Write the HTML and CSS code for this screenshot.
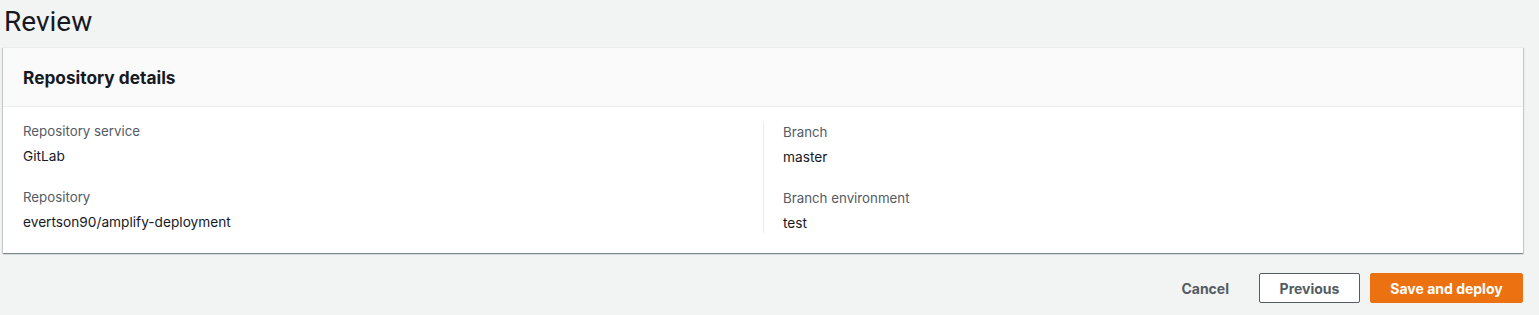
FILE: index.html
```html
<!DOCTYPE html>
<html lang="en">
<head>
    <meta charset="UTF-8">
    <meta name="viewport" content="width=device-width, initial-scale=1.0">
    <title>Review</title>
    <link rel="stylesheet" href="styles.css">
</head>
<body>
    <div class="page">
        <h1 class="page-title">Review</h1>

        <div class="card">
            <div class="card-header">
                <h2>Repository details</h2>
            </div>
            <div class="card-body">
                <div class="column">
                    <div class="field">
                        <div class="field-label">Repository service</div>
                        <div class="field-value">GitLab</div>
                    </div>
                    <div class="field">
                        <div class="field-label">Repository</div>
                        <div class="field-value">evertson90/amplify-deployment</div>
                    </div>
                </div>
                <div class="column column-split">
                    <div class="field">
                        <div class="field-label">Branch</div>
                        <div class="field-value">master</div>
                    </div>
                    <div class="field">
                        <div class="field-label">Branch environment</div>
                        <div class="field-value">test</div>
                    </div>
                </div>
            </div>
        </div>

        <div class="actions">
            <button type="button" class="btn btn-link">Cancel</button>
            <button type="button" class="btn btn-normal">Previous</button>
            <button type="button" class="btn btn-primary">Save and deploy</button>
        </div>
    </div>
</body>
</html>
```

FILE: styles.css
```css
body {
    font-family: Inter, Roboto, "Liberation Sans", Arial, sans-serif;
    background-color: #f2f3f3;
    color: #16191f;
    margin: 0;
}

.page {
    width: 1520px;
    padding: 4px 0 0 3px;
}

.page-title {
    margin: 0 0 7px 1px;
    font-family: Roboto, "Liberation Sans", Arial, sans-serif;
    font-size: 28px;
    line-height: 36px;
    font-weight: 400;
    color: #16191f;
}

.card {
    background: #fff;
    border-top: 1px solid #eaeded;
    box-shadow: 0 1px 1px 0 rgba(0, 28, 36, 0.3), 1px 1px 1px 0 rgba(0, 28, 36, 0.15), -1px 1px 1px 0 rgba(0, 28, 36, 0.15);
}

.card-header {
    background: #fafafa;
    border-bottom: 1px solid #eaeded;
    height: 58px;
    padding: 0 20px;
    display: flex;
    align-items: center;
}

    .card-header h2 {
        margin: 0;
        font-size: 17.3px;
        font-weight: 700;
        color: #16191f;
    }

.card-body {
    display: grid;
    grid-template-columns: 1fr 1fr;
    padding: 14px 20px 20px;
}

.column {
    display: flex;
    flex-direction: column;
    gap: 21px;
}

.column-split {
    border-left: 1px solid #eaeded;
    padding-left: 19px;
    margin-top: 1px;
}

.field-label {
    font-size: 13.3px;
    line-height: 20px;
    color: #545b64;
    margin-bottom: 5px;
}

.field-value {
    font-size: 13.7px;
    line-height: 20px;
    color: #16191f;
}

.actions {
    display: flex;
    justify-content: flex-end;
    align-items: center;
    margin-top: 20px;
}

.btn {
    font-family: inherit;
    font-size: 14px;
    font-weight: 700;
    height: 30px;
    border-radius: 2px;
    cursor: pointer;
}

.btn-link {
    background: none;
    border: none;
    color: #545b64;
    padding: 0 20px;
    margin-right: 10px;
}

.btn-normal {
    background: #fff;
    border: 1px solid #545b64;
    color: #545b64;
    width: 101px;
    margin-right: 10px;
}

.btn-primary {
    background: #ec7211;
    border: 1px solid #ec7211;
    color: #fff;
    width: 153px;
}
```
